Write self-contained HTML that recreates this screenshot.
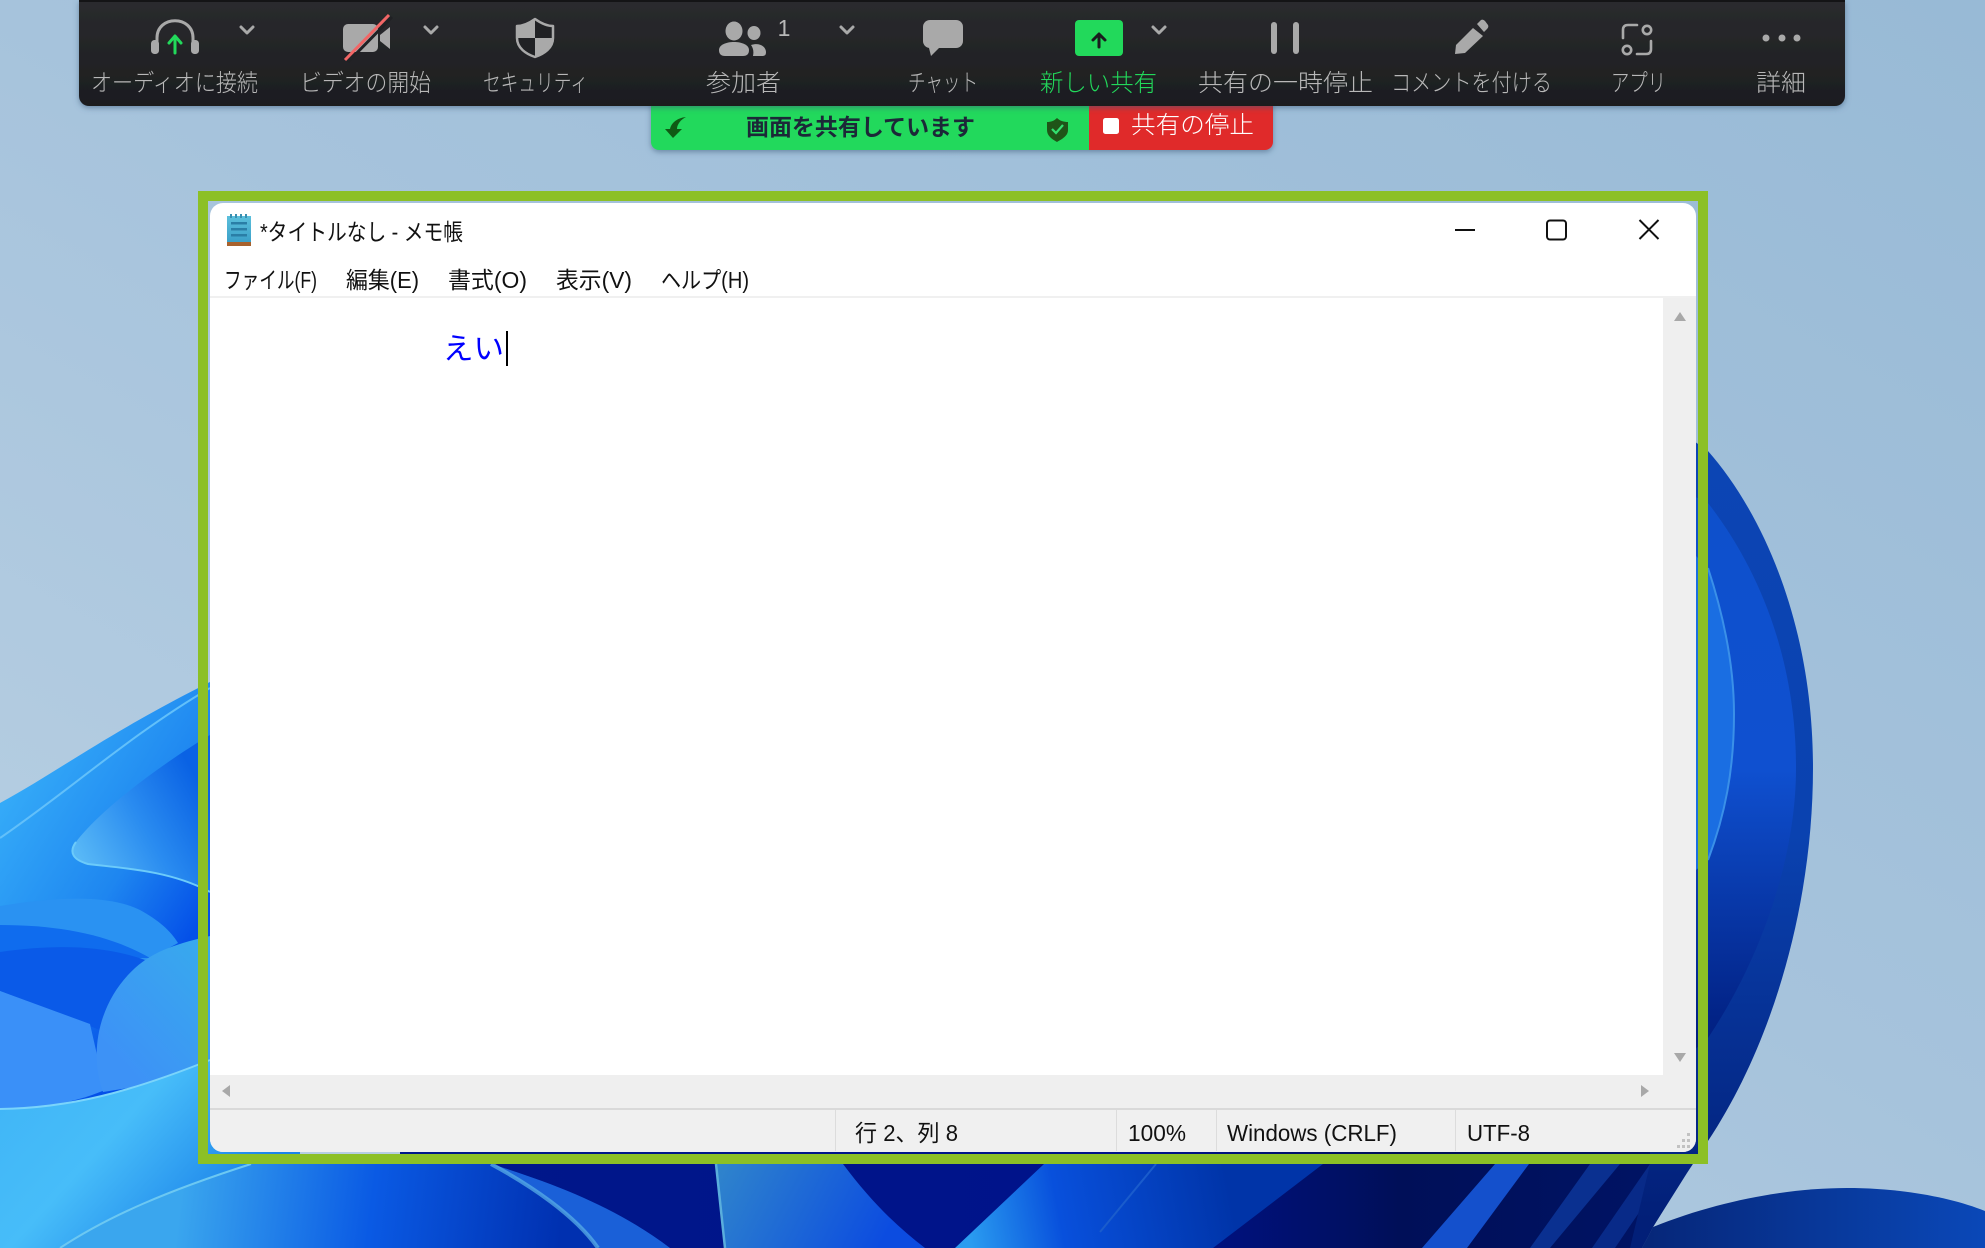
<!DOCTYPE html>
<html lang="ja"><head><meta charset="utf-8"><title>メモ帳</title>
<style>
html,body{margin:0;padding:0;width:1985px;height:1248px;overflow:hidden;background:#a8c4dc}
svg{display:block}
text{font-family:"Liberation Sans","Noto Sans CJK JP",sans-serif}
.l{font-size:24px;fill:#b8b8b8;font-weight:300}
.w{font-size:23px;fill:#111}
.i{fill:#a9a9a9}
.s{fill:none;stroke:#a9a9a9;stroke-linecap:round;stroke-linejoin:round}
</style></head><body>
<svg width="1985" height="1248" viewBox="0 0 1985 1248" xmlns="http://www.w3.org/2000/svg">
<defs>
<linearGradient id="bg" x1="1" y1="0" x2="0.1" y2="1"><stop offset="0" stop-color="#98bad6"/><stop offset=".5" stop-color="#a6c3dc"/><stop offset="1" stop-color="#b9d0e3"/></linearGradient>
<linearGradient id="lb" x1="0" y1="800" x2="198" y2="925" gradientUnits="userSpaceOnUse"><stop offset="0" stop-color="#35abf8"/><stop offset=".6" stop-color="#1e86f0"/><stop offset="1" stop-color="#0450e8"/></linearGradient>
<linearGradient id="pt" x1="75" y1="850" x2="198" y2="780" gradientUnits="userSpaceOnUse"><stop offset="0" stop-color="#58b8f6"/><stop offset=".5" stop-color="#2a8cf0"/><stop offset="1" stop-color="#0a62e4"/></linearGradient>
<linearGradient id="rp" x1="100" y1="1040" x2="198" y2="950" gradientUnits="userSpaceOnUse"><stop offset="0" stop-color="#3d92f6"/><stop offset="1" stop-color="#38a8ee"/></linearGradient>
<linearGradient id="sw" x1="0" y1="1060" x2="198" y2="1240" gradientUnits="userSpaceOnUse"><stop offset="0" stop-color="#3fb4f6"/><stop offset=".5" stop-color="#47bdf9"/><stop offset="1" stop-color="#1c84ea"/></linearGradient>
<linearGradient id="bl" x1="180" y1="1200" x2="560" y2="1248" gradientUnits="userSpaceOnUse"><stop offset="0" stop-color="#3aa6ee"/><stop offset=".5" stop-color="#0a5ae4"/><stop offset="1" stop-color="#0030b0"/></linearGradient>
<linearGradient id="bb" x1="720" y1="1164" x2="880" y2="1248" gradientUnits="userSpaceOnUse"><stop offset="0" stop-color="#2f84cc"/><stop offset="1" stop-color="#0c4ce0"/></linearGradient>
<linearGradient id="bc" x1="970" y1="1240" x2="1230" y2="1190" gradientUnits="userSpaceOnUse"><stop offset="0" stop-color="#2a9cf0"/><stop offset=".35" stop-color="#0850dc"/><stop offset="1" stop-color="#0034a8"/></linearGradient>
<linearGradient id="nv" x1="500" y1="0" x2="1700" y2="0" gradientUnits="userSpaceOnUse"><stop offset="0" stop-color="#00178a"/><stop offset=".55" stop-color="#00128a"/><stop offset=".75" stop-color="#000f58"/><stop offset="1" stop-color="#001466"/></linearGradient>
<linearGradient id="pa" x1="0" y1="450" x2="0" y2="1220" gradientUnits="userSpaceOnUse"><stop offset="0" stop-color="#0c45b4"/><stop offset=".5" stop-color="#0a42b0"/><stop offset="1" stop-color="#021f78"/></linearGradient>
<linearGradient id="pb" x1="0" y1="500" x2="0" y2="1040" gradientUnits="userSpaceOnUse"><stop offset="0" stop-color="#0e50cc"/><stop offset=".5" stop-color="#0f50d0"/><stop offset="1" stop-color="#011f80"/></linearGradient>
<linearGradient id="dm" x1="1650" y1="0" x2="1985" y2="0" gradientUnits="userSpaceOnUse"><stop offset="0" stop-color="#06277a"/><stop offset="1" stop-color="#0a48b8"/></linearGradient>
<linearGradient id="tb" x1="0" y1="0" x2="0" y2="1"><stop offset="0" stop-color="#2a2b2e"/><stop offset="1" stop-color="#1c1d1f"/></linearGradient>
<linearGradient id="np" x1="0" y1="0" x2="0" y2="1"><stop offset="0" stop-color="#5cc0dc"/><stop offset="1" stop-color="#3a9fc8"/></linearGradient>
<filter id="sh" x="-5%" y="-20%" width="110%" height="140%"><feDropShadow dx="0" dy="2" stdDeviation="3" flood-color="#3a5a78" flood-opacity=".55"/></filter>
</defs>

<!-- wallpaper -->
<rect width="1985" height="1248" fill="url(#bg)"/>

<!-- left bloom -->
<path d="M0,803 C70,765 135,712 300,640 L300,1248 L0,1248Z" fill="url(#lb)"/>
<path d="M0,838 C70,790 130,735 210,688" fill="none" stroke="#62c0fa" stroke-width="2"/>
<path d="M0,906 C60,896 110,895 140,910 C158,920 170,930 178,943 L143,962 L0,960Z" fill="#2a92f2"/>
<path d="M0,925 C60,925 110,935 150,958 L0,958Z" fill="#0f6cee"/>
<path d="M0,952 C50,945 100,944 145,960 L120,985 L100,1030 L0,991Z" fill="#0a5ae8"/>
<path d="M0,991 L90,1024 L105,1090 C70,1105 30,1109 0,1109Z" fill="#3a90f8"/>
<path d="M210,735 C160,765 100,810 76,842 C68,853 74,860 88,864 C120,868 170,870 210,892Z" fill="url(#pt)"/>
<path d="M76,842 C68,853 74,860 88,864 C120,868 170,870 210,892" fill="none" stroke="#6ccbfa" stroke-width="2"/>
<path d="M210,936 C180,943 155,950 135,968 C100,1000 88,1050 103,1092 L210,1075Z" fill="url(#rp)"/>
<path d="M0,1109 C70,1108 130,1092 210,1060 L300,1060 L300,1248 L0,1248Z" fill="url(#sw)"/>
<path d="M0,1109 C70,1108 130,1092 210,1060" fill="none" stroke="#7ad4fb" stroke-width="2"/>

<!-- bottom -->
<path d="M400,1150 H1700 L1653,1227 L1642,1248 H400Z" fill="url(#nv)"/>
<path d="M60,1248 C110,1215 170,1190 251,1164 L491,1164 C560,1185 620,1210 670,1248Z" fill="url(#bl)"/>
<path d="M491,1164 C530,1185 575,1215 598,1248 L670,1248 C620,1210 560,1185 491,1164Z" fill="#1a60d8"/>
<path d="M60,1248 C110,1215 170,1190 251,1164" fill="none" stroke="#6cc8f2" stroke-width="2"/>
<path d="M491,1164 C530,1185 575,1215 598,1248" fill="none" stroke="#5cb4e8" stroke-width="4" opacity=".7"/>
<path d="M716,1164 L843,1164 C870,1200 895,1225 925,1248 L725,1248Z" fill="url(#bb)"/>
<path d="M716,1164 L725,1248" stroke="#5aaedc" stroke-width="2.5" fill="none"/>
<path d="M1044,1164 L1323,1164 L1213,1248 L955,1248Z" fill="url(#bc)"/>
<path d="M1156,1164 L1100,1232" stroke="#1a5ccc" stroke-width="2" fill="none"/>
<path d="M1495,1164 L1529,1164 L1467,1248 L1422,1248Z" fill="#1450cc"/>
<path d="M1590,1164 L1620,1164 L1550,1248 L1530,1248Z" fill="#0a3090"/>
<path d="M1650,1164 L1672,1164 L1615,1248 L1592,1248Z" fill="#082a88"/>

<!-- right bloom -->
<path d="M1650,410 L1708,451 C1760,510 1813,620 1813,768 C1813,900 1775,1040 1708,1141 L1687,1173 L1653,1227 L1642,1248 L1630,1248 L1650,1164Z" fill="url(#pa)"/>
<path d="M1660,480 L1708,503 C1760,570 1796,660 1796,768 C1796,860 1760,960 1708,1038 L1660,1080Z" fill="url(#pb)"/>
<path d="M1660,520 L1708,568 C1725,620 1734,670 1734,714 C1734,770 1725,815 1708,860 L1660,900Z" fill="#1a6ee2"/>
<path d="M1708,568 C1725,620 1734,670 1734,714 C1734,770 1725,815 1708,860" fill="none" stroke="#3a90e8" stroke-width="2"/>
<path d="M1642,1248 L1653,1227 C1720,1200 1790,1188 1847,1188 C1900,1188 1950,1197 1985,1211 L1985,1248Z" fill="url(#dm)"/>

<!-- notepad window -->
<rect x="210" y="203" width="1486" height="949" rx="13" fill="#fff"/>
<rect x="203" y="196" width="1500" height="963" fill="none" stroke="#8cc026" stroke-width="10"/>
<path d="M1663,298 H1696 V1108 H210 V1075 H1663Z" fill="#efefef"/>
<rect x="210" y="296" width="1486" height="2" fill="#f0f0f0"/>
<path d="M210,1108 H1696 V1139 a13,13 0 0 1 -13,13 H223 a13,13 0 0 1 -13,-13Z" fill="#f0f0f0"/>
<rect x="210" y="1108" width="1486" height="2" fill="#d9d9d9"/>
<g fill="#dcdcdc"><rect x="835" y="1110" width="1" height="41"/><rect x="1116" y="1110" width="1" height="41"/><rect x="1216" y="1110" width="1" height="41"/><rect x="1455" y="1110" width="1" height="41"/></g>

<!-- notepad icon -->
<rect x="227" y="216" width="24" height="27" fill="url(#np)"/>
<rect x="227" y="242" width="24" height="4" fill="#a8622e"/>
<g fill="#2a7ea6"><rect x="231" y="222" width="16" height="2.5"/><rect x="231" y="228" width="16" height="2.5"/><rect x="231" y="234" width="16" height="2.5"/></g>
<g fill="#3a8fb0"><rect x="230" y="214" width="2" height="4"/><rect x="235" y="214" width="2" height="4"/><rect x="240" y="214" width="2" height="4"/><rect x="245" y="214" width="2" height="4"/></g>

<text class="w" x="260" y="240" textLength="203" lengthAdjust="spacingAndGlyphs">*タイトルなし - メモ帳</text>
<text class="w" x="224" y="288" textLength="93" lengthAdjust="spacingAndGlyphs">ファイル(F)</text>
<text class="w" x="346" y="288" textLength="73" lengthAdjust="spacingAndGlyphs">編集(E)</text>
<text class="w" x="448" y="288" textLength="79" lengthAdjust="spacingAndGlyphs">書式(O)</text>
<text class="w" x="556" y="288" textLength="76" lengthAdjust="spacingAndGlyphs">表示(V)</text>
<text class="w" x="661" y="288" textLength="88" lengthAdjust="spacingAndGlyphs">ヘルプ(H)</text>

<text x="443" y="359" font-size="30" fill="#0000ff" textLength="61" lengthAdjust="spacingAndGlyphs">えい</text>
<rect x="506" y="331" width="2" height="35" fill="#000"/>

<!-- window controls -->
<rect x="1455" y="229" width="20" height="2" fill="#111"/>
<rect x="1547" y="220.5" width="19" height="19" rx="3" fill="none" stroke="#111" stroke-width="2"/>
<path d="M1639.5,220 L1658.5,239 M1658.5,220 L1639.5,239" stroke="#111" stroke-width="2" fill="none"/>

<!-- scroll arrows -->
<g fill="#a8a8a8">
<path d="M1680,312 L1686,321 H1674Z"/>
<path d="M1680,1062 L1674,1053 H1686Z"/>
<path d="M222,1091 L230,1085 V1097Z"/>
<path d="M1649,1091 L1641,1085 V1097Z"/>
</g>

<!-- status -->
<text class="w" x="855" y="1141" textLength="103" lengthAdjust="spacingAndGlyphs">行 2、列 8</text>
<text class="w" x="1128" y="1141" textLength="58" lengthAdjust="spacingAndGlyphs">100%</text>
<text class="w" x="1227" y="1141" textLength="170" lengthAdjust="spacingAndGlyphs">Windows (CRLF)</text>
<text class="w" x="1467" y="1141" textLength="63" lengthAdjust="spacingAndGlyphs">UTF-8</text>
<g fill="#c2c2c2"><rect x="1687" y="1133" width="3" height="3"/><rect x="1687" y="1139" width="3" height="3"/><rect x="1687" y="1145" width="3" height="3"/><rect x="1682" y="1139" width="3" height="3"/><rect x="1682" y="1145" width="3" height="3"/><rect x="1677" y="1145" width="3" height="3"/></g>

<!-- share bar -->
<g filter="url(#sh)">
<path d="M651,100 H1089 V150 H659 a8,8 0 0 1 -8,-8Z" fill="#22d95b"/>
<path d="M1089,100 H1273 V142 a8,8 0 0 1 -8,8 H1089Z" fill="#e02a2a"/>
</g>
<path d="M686,117 C676,118 671,124 670,129 L665,129 L673,138 L682,129 L677,129 C677,125 680,120 686,117Z" fill="#0f5a14"/>
<text x="746" y="135" font-size="23" font-weight="700" fill="#1c2838" textLength="229" lengthAdjust="spacingAndGlyphs">画面を共有しています</text>
<path d="M1057,118 C1060,121 1064,122 1068,122 V130 C1068,136 1062,139 1057,142 C1052,139 1047,136 1047,130 V122 C1051,122 1054,121 1057,118Z" fill="#1f5518"/>
<path d="M1052,129 L1056,133 L1063,125" stroke="#33e070" stroke-width="2.2" fill="none"/>
<rect x="1103" y="118" width="16" height="16" rx="2.5" fill="#fff"/>
<text x="1131" y="133" font-size="24" font-weight="300" fill="#fff" textLength="123" lengthAdjust="spacingAndGlyphs">共有の停止</text>

<!-- toolbar -->
<path d="M79,0 H1845 V96 a10,10 0 0 1 -10,10 H89 a10,10 0 0 1 -10,-10Z" fill="url(#tb)" filter="url(#sh)"/>
<rect x="79" y="0" width="1766" height="2" fill="#141416"/>

<!-- headphones -->
<path class="s" stroke-width="3" d="M157,44 V38 C157,15 193,15 193,38 V44"/>
<rect class="i" x="151" y="40" width="8" height="14" rx="3.5"/>
<rect class="i" x="191" y="40" width="8" height="14" rx="3.5"/>
<path d="M175,53 V37 M169,43 L175,36 L181,43" stroke="#22d95b" stroke-width="3" fill="none" stroke-linecap="round" stroke-linejoin="round"/>

<!-- chevrons -->
<g class="s" stroke-width="3">
<path d="M241,27 L247,33 L253,27"/>
<path d="M425,27 L431,33 L437,27"/>
<path d="M841,27 L847,33 L853,27"/>
<path d="M1153,27 L1159,33 L1165,27"/>
</g>

<!-- video -->
<rect class="i" x="343" y="24" width="35" height="28" rx="5"/>
<path class="i" d="M380,35 L390,27 V49 L380,41Z"/>
<path d="M348,62 L392,17" stroke="#202124" stroke-width="3" fill="none"/>
<path d="M345,60 L389,15" stroke="#f26666" stroke-width="3" fill="none"/>

<!-- shield -->
<path d="M535,19 C542,24 548,26 553,26 V38 C553,48 544,54 535,57 C526,54 517,48 517,38 V26 C522,26 528,24 535,19Z" fill="#202124" stroke="#a9a9a9" stroke-width="2.5" stroke-linejoin="round"/>
<path class="i" d="M535,19 C528,24 522,26 517,26 V38 H535Z"/>
<path class="i" d="M535,38 H553 C553,48 544,54 535,57Z"/>

<!-- participants -->
<ellipse class="i" cx="734" cy="31" rx="8.5" ry="9.5"/>
<path class="i" d="M719,50 C719,45 726,42 734,42 C742,42 749,45 749,50 C749,54 747,56 743,56 H725 C721,56 719,54 719,50Z"/>
<ellipse class="i" cx="754" cy="33" rx="6.5" ry="7"/>
<path class="i" d="M751,45 C760,42 766,47 766,52 C766,55 765,56 762,56 H753 C754,51 753,48 751,45Z"/>
<text x="784" y="36" font-size="23" font-weight="300" fill="#b8b8b8" text-anchor="middle">1</text>

<!-- chat -->
<rect class="i" x="923" y="20" width="40" height="28" rx="7"/>
<path class="i" d="M928,44 L931,56 L941,46Z"/>

<!-- share -->
<rect x="1075" y="20" width="48" height="36" rx="4" fill="#22d95b"/>
<path d="M1099,47 V35 M1093,40 L1099,34 L1105,40" stroke="#1a1c1e" stroke-width="3" fill="none" stroke-linecap="round" stroke-linejoin="round"/>

<!-- pause -->
<rect class="i" x="1271" y="22" width="6" height="32" rx="3"/>
<rect class="i" x="1293" y="22" width="6" height="32" rx="3"/>

<!-- pencil -->
<path class="i" d="M1455,54 L1456,45 L1473,28 L1483,36 L1465,53Z"/>
<path class="i" d="M1477,24 L1481,20 Q1483,19 1485,21 L1488,25 Q1489,27 1487,29 L1484,32Z"/>

<!-- apps -->
<path class="s" stroke-width="2.6" d="M1637,25 H1628 Q1623,25 1623,30 V38"/>
<path class="s" stroke-width="2.6" d="M1637,54 H1646 Q1651,54 1651,49 V41"/>
<circle class="s" cx="1647" cy="30" r="4.2" stroke-width="2.6"/>
<circle class="s" cx="1627" cy="50" r="4.2" stroke-width="2.6"/>

<!-- dots -->
<circle class="i" cx="1766" cy="38" r="3.5"/><circle class="i" cx="1782" cy="38" r="3.5"/><circle class="i" cx="1797" cy="38" r="3.5"/>

<!-- labels -->
<text class="l" x="91" y="91" textLength="167" lengthAdjust="spacingAndGlyphs">オーディオに接続</text>
<text class="l" x="300" y="91" textLength="131" lengthAdjust="spacingAndGlyphs">ビデオの開始</text>
<text class="l" x="483" y="91" textLength="105" lengthAdjust="spacingAndGlyphs">セキュリティ</text>
<text class="l" x="706" y="91" textLength="75" lengthAdjust="spacingAndGlyphs">参加者</text>
<text class="l" x="908" y="91" textLength="70" lengthAdjust="spacingAndGlyphs">チャット</text>
<text class="l" x="1040" y="91" textLength="117" lengthAdjust="spacingAndGlyphs" style="fill:#22d95b">新しい共有</text>
<text class="l" x="1198" y="91" textLength="175" lengthAdjust="spacingAndGlyphs">共有の一時停止</text>
<text class="l" x="1391" y="91" textLength="161" lengthAdjust="spacingAndGlyphs">コメントを付ける</text>
<text class="l" x="1611" y="91" textLength="55" lengthAdjust="spacingAndGlyphs">アプリ</text>
<text class="l" x="1756" y="91" textLength="50" lengthAdjust="spacingAndGlyphs">詳細</text>
</svg>
</body></html>
